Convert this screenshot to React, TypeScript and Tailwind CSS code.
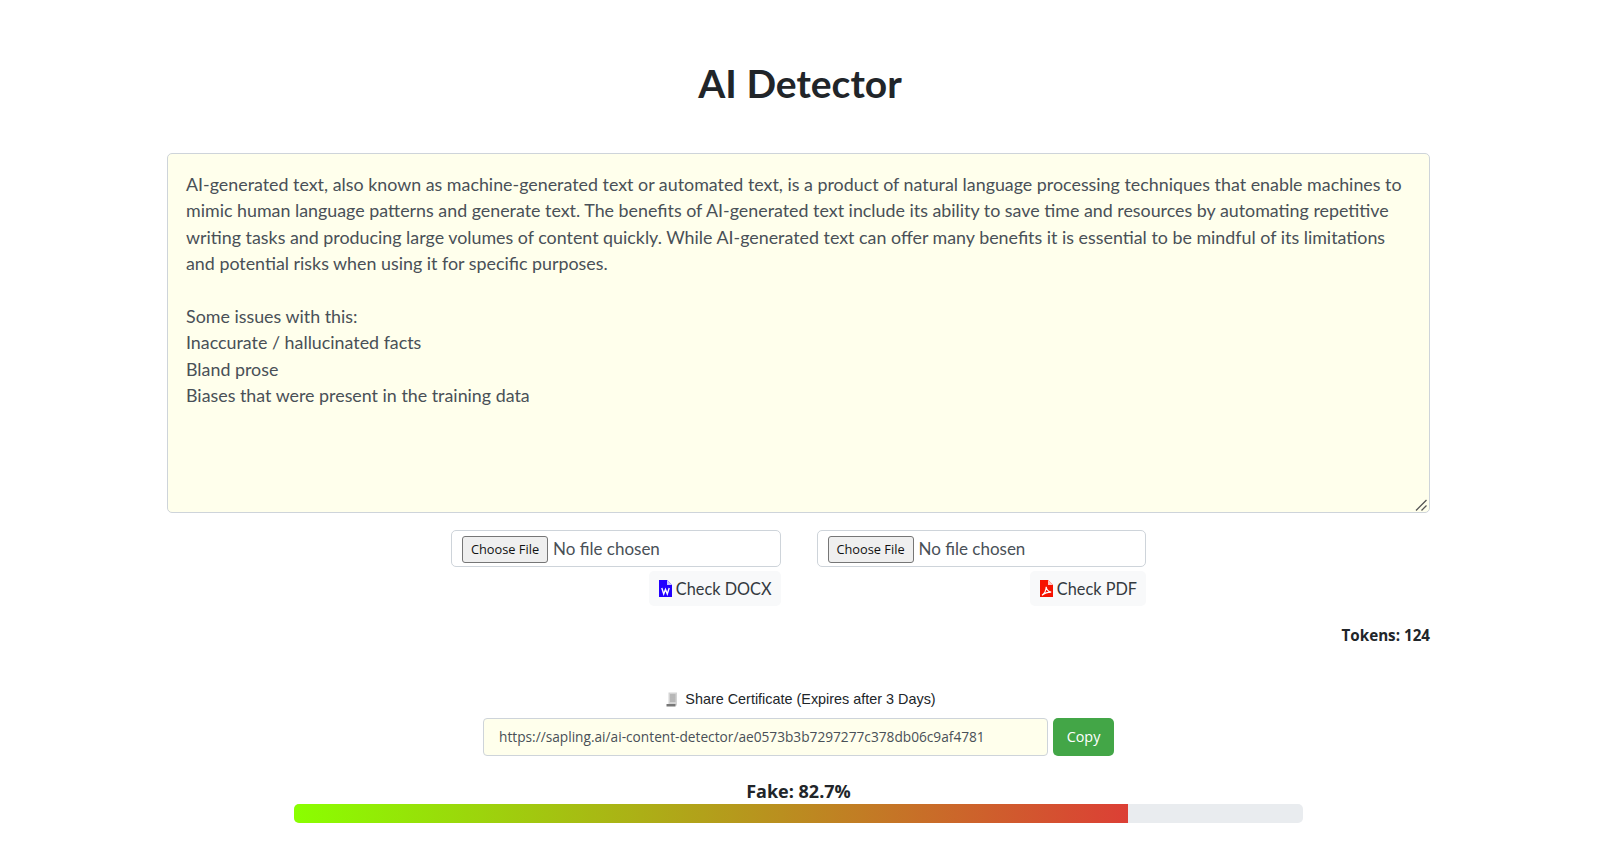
const sampleText = `AI-generated text, also known as machine-generated text or automated text, is a product of natural language processing techniques that enable machines to mimic human language patterns and generate text. The benefits of AI-generated text include its ability to save time and resources by automating repetitive writing tasks and producing large volumes of content quickly. While AI-generated text can offer many benefits it is essential to be mindful of its limitations and potential risks when using it for specific purposes.

Some issues with this:
Inaccurate / hallucinated facts
Bland prose
Biases that were present in the training data`

function FilePicker() {
    return (
        <div className="w-[329.5px] h-[37px] border border-[#ced4da] rounded-[5px] bg-white flex items-center pl-[10px] text-[#495057] text-[17px] font-['Lato',sans-serif]">
            <span className="w-[86px] h-[27px] mt-[1px] mr-[5px] pt-[1px] border border-[#767676] rounded-[3px] bg-[#efefef] text-[#111] text-[12.8px] font-['Open_Sans',sans-serif] flex items-center justify-center">Choose File</span>
            No file chosen
        </div>
    )
}

function WordIcon() {
    return (
        <svg viewBox="0 0 13 17" className="w-[13px] h-[17px] mb-[2px] ml-[1px]">
            <path d="M0 0h8l5 5v12H0z" fill="#2200ff" />
            <path d="M8 0l5 5H8z" fill="#c9c4ff" />
            <path d="M2.8 8l1.900 6 1.800-4.500 1.800 4.500 1.900-6" stroke="#fff" strokeWidth="1.4" fill="none" />
        </svg>
    )
}

function PdfIcon() {
    return (
        <svg viewBox="0 0 13 17" className="w-[13px] h-[17px] mb-[2px] ml-[1px]">
            <path d="M0 0h8l5 5v12H0z" fill="#f61200" />
            <path d="M8 0l5 5H8z" fill="#ffc9c4" />
            <path d="M2 15.2c2.600-1.600 4-4.600 4.200-8.400.4 3 2.200 4.900 5 5.300-3.200 0-6.400.8-9.200 3.100z" stroke="#fff" strokeWidth="1.1" fill="none" />
        </svg>
    )
}

function ReceiptIcon() {
    return (
        <svg viewBox="0 0 12 15" className="w-[12px] h-[15px] ml-[5px] mr-[7px]">
            <rect x="2.5" y="0.5" width="8.5" height="13" fill="#d4d4d4" />
            <rect x="0.5" y="12" width="9" height="2.5" fill="#777" />
            <path d="M4 3h5.5M4 5h5.5M4 7h5.5M4 9h5.5" stroke="#8d8d8d" strokeWidth="0.8" />
        </svg>
    )
}

export default function App() {
    return (
        <div className="w-[1600px] h-[848px] overflow-hidden bg-white font-['Open_Sans',sans-serif] text-[#212529]">
            <h1 className="pt-[61px] h-[153px] text-center text-[39px] leading-[44px] font-bold font-['Lato',sans-serif]">AI Detector</h1>

            <div className="w-[1263px] ml-[167px]">
                <div className="relative">
                    <textarea
                        readOnly
                        value={sampleText}
                        className="block w-full h-[360px] px-[18px] pt-[17px] pb-[18px] border border-[#ced4da] rounded-[5px] bg-[#ffffec] text-[#495057] text-[17.85px] leading-[26.4px] font-['Lato',sans-serif] outline-none resize-none"
                    />
                    {/* resize handle */}
                    <svg viewBox="0 0 12 12" className="absolute right-[3px] bottom-[2px] w-[12px] h-[12px]">
                        <path d="M1 11.5 11.5 1M6.5 11.5l5-5" stroke="#555" strokeWidth="1.3" fill="none" />
                    </svg>
                </div>

                <div className="flex justify-center gap-[36px] mt-[17px]">
                    <div className="flex flex-col items-end gap-[4px]">
                        <FilePicker />
                        <button className="h-[35px] px-[9px] pt-[1px] rounded-[5px] bg-[#f8f9fa] text-[#343a40] text-[16.3px] font-['Lato',sans-serif] flex items-center gap-[4px]">
                            <WordIcon />
                            Check DOCX
                        </button>
                    </div>
                    <div className="flex flex-col items-end gap-[4px]">
                        <FilePicker />
                        <button className="h-[35px] px-[9px] pt-[1px] rounded-[5px] bg-[#f8f9fa] text-[#343a40] text-[16.3px] font-['Lato',sans-serif] flex items-center gap-[4px]">
                            <PdfIcon />
                            Check PDF
                        </button>
                    </div>
                </div>

                <div className="mt-[17px] text-right text-[15.2px] leading-[24px] font-bold text-[#212529]">Tokens: 124</div>

                <div className="mt-[42px] flex items-center justify-center h-[21px] text-[14.4px] font-['Liberation_Sans',sans-serif]">
                    <ReceiptIcon />
                    Share Certificate (Expires after 3 Days)
                </div>

                <div className="mt-[8px] ml-[316px] flex gap-[5px]">
                    <div className="w-[565px] h-[38px] px-[15px] pt-[1px] flex items-center border border-[#ced4da] rounded-[4px] bg-[#ffffec] text-[#495057] text-[13.7px]">
                        https://sapling.ai/ai-content-detector/ae0573b3b7297277c378db06c9af4781
                    </div>
                    <button className="w-[61px] h-[38px] rounded-[5px] bg-[#43a647] text-white text-[14.4px]">Copy</button>
                </div>
            </div>

            <div className="w-[1009px] ml-[294px] mt-[22px]">
                <div className="text-center text-[18px] leading-[26px] font-bold">Fake: 82.7%</div>
                <div className="h-[19px] rounded-[5px] bg-[#e9ecef] overflow-hidden">
                    <div className="h-full bg-linear-to-r/srgb from-[#8aff00] to-[#dc3f35]" style={{ width: '82.7%' }} />
                </div>
            </div>
        </div>
    )
}
